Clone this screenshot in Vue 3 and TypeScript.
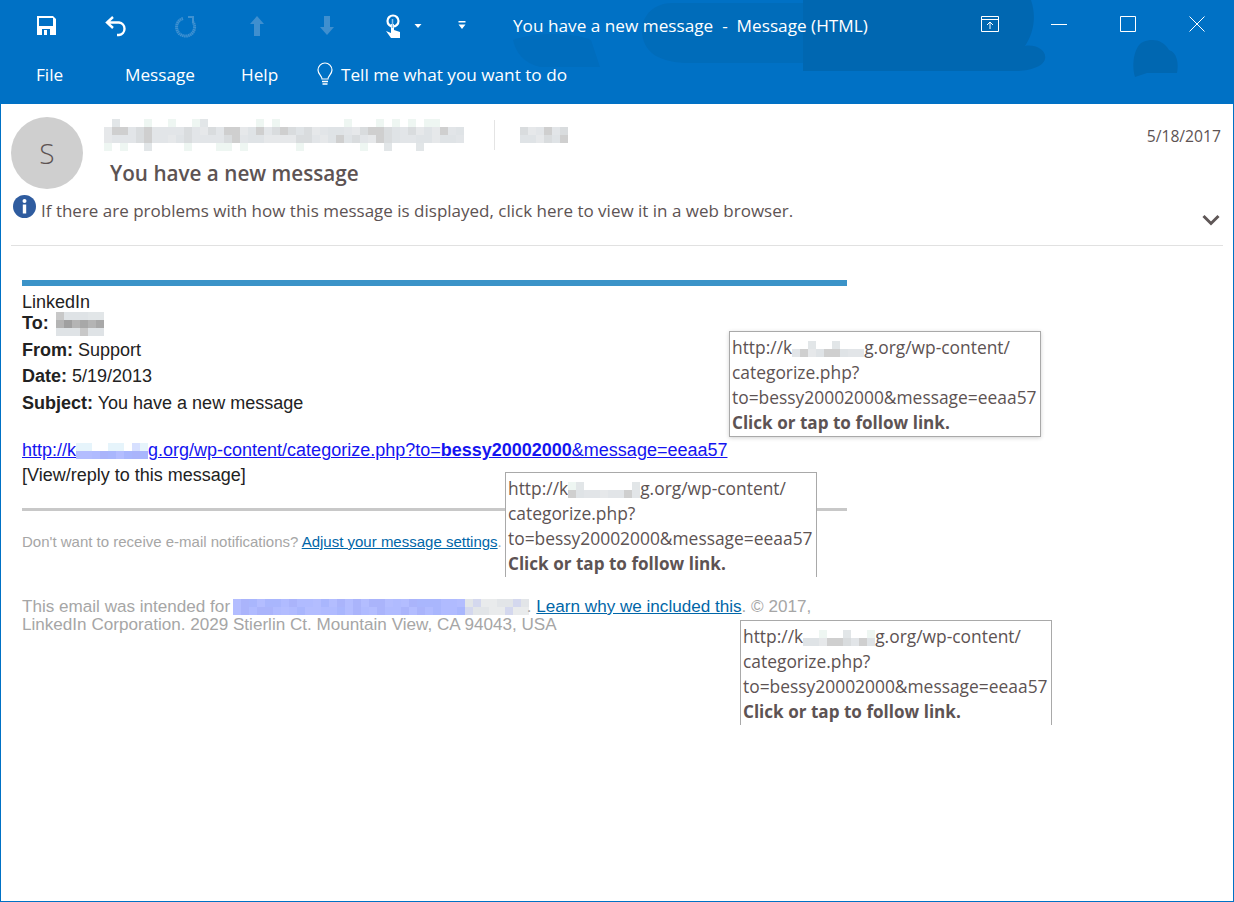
<template>
	<div class="window">
		<!-- Title bar and ribbon tabs -->
		<header class="ribbon">
			<svg class="clouds" width="1234" height="80" viewBox="0 0 1234 80">
				<path d="M513 40c20-8 60-8 78 0l9 27h-60c-16-4-24-14-27-27z" fill="#006dbd" />
				<path d="M642 30c0-16 14-27 30-27h131v60H690c-30 0-48-10-48-33z" fill="#006cba" />
				<path d="M803 0h228c6 18 2 34-6 46 10-2 22 4 20 13-2 8-16 12-30 12H803z" fill="#0067b1" />
				<path d="M1135 77c-4-14 0-32 8-35 10-4 20-2 26 8 8 2 10 14 8 23h-30z" fill="#0067b1" />
			</svg>
			<div class="title-row">
				<div class="quick-tools">
					<button v-for="tool in quickTools" :key="tool.name" class="tool" :class="tool.name">
						<svg width="26" height="26" viewBox="0 0 26 26" v-html="tool.svg"></svg>
					</button>
				</div>
				<div class="doc-title">You have a new message&nbsp; -&nbsp; Message (HTML)</div>
				<div class="window-btns">
					<svg class="win-icon restore" width="20" height="20" viewBox="0 0 20 20" fill="none" stroke="#fff">
						<path d="M1.500 2.500h17v15h-17zM1.500 5.500h17M10 15V8M7 11l3-3 3 3" />
					</svg>
					<svg class="win-icon minimize" width="16" height="20" viewBox="0 0 16 20" fill="none" stroke="#fff">
						<path d="M0 10.500h16" />
					</svg>
					<svg class="win-icon maximize" width="16" height="20" viewBox="0 0 16 20" fill="none" stroke="#fff">
						<path d="M.5 2.500h15v15H.5z" />
					</svg>
					<svg class="win-icon close" width="16" height="20" viewBox="0 0 16 20" fill="none" stroke="#fff">
						<path d="M.5 2.500l15 15M15.500 2.500l-15 15" />
					</svg>
				</div>
			</div>
			<nav class="tab-row">
				<span class="tab file">File</span>
				<span class="tab message">Message</span>
				<span class="tab help">Help</span>
				<svg class="bulb" width="18" height="24" viewBox="0 0 18 24" fill="none" stroke="#fff" stroke-width="1.2">
					<path d="M6 17c0-3-4-5-4-9a7 7 0 0 1 14 0c0 4-4 6-4 9z" />
					<path d="M6 19.500h6M6.500 22h5" stroke-width="1.5" />
				</svg>
				<span class="tell">Tell me what you want to do</span>
			</nav>
		</header>

		<!-- Message header -->
		<section class="msg-head">
			<div class="head-top">
				<div class="avatar">S</div>
				<div class="head-main">
					<div class="sender">
						<span class="smudge sender-name" :style="senderName"></span>
						<div class="sender-sep"></div>
						<span class="smudge" :style="senderExtra"></span>
					</div>
					<div class="subject">You have a new message</div>
				</div>
				<div class="date">5/18/2017</div>
			</div>
			<div class="info-row">
				<svg class="info-icon" width="23" height="23" viewBox="0 0 23 23">
					<circle cx="11.500" cy="11.500" r="11.500" fill="#2f5c9f" />
					<rect x="9.800" y="9.500" width="3.400" height="9" fill="#fff" />
					<circle cx="11.500" cy="6" r="2" fill="#fff" />
				</svg>
				<span>If there are problems with how this message is displayed, click here to view it in a web browser.</span>
				<svg class="chevron" width="18" height="12" viewBox="0 0 18 12" fill="none" stroke="#5f5757" stroke-width="3">
					<path d="M1.500 2l7.500 7.500L16.500 2" />
				</svg>
			</div>
		</section>

		<!-- Message body -->
		<main class="msg-body">
			<div class="accent-bar"></div>
			<div class="line first">LinkedIn</div>
			<div class="line to"><b>To:</b> <span class="smudge inline to-name" :style="toName"></span></div>
			<div class="line from"><b>From:</b> Support</div>
			<div class="line date-line"><b>Date:</b> 5/19/2013</div>
			<div class="line subject-line"><b>Subject:</b> You have a new message</div>
			<a class="main-link">http://k<span class="smudge inline" :style="linkHide"></span>g.org/wp-content/categorize.php?to=<b>bessy20002000</b>&amp;message=eeaa57</a>
			<div class="line view">[View/reply to this message]</div>
			<div class="rule"></div>
			<div class="small settings">Don't want to receive e-mail notifications? <a>Adjust your message settings</a>.</div>
			<div class="small intended">
				This email was intended for <span class="smudge inline mail-head" :style="mailHide"></span><span class="smudge inline mail-tail" :style="mailTail"></span>. <a>Learn why we included this</a>. © 2017,<br />
				LinkedIn Corporation. 2029 Stierlin Ct. Mountain View, CA 94043, USA
			</div>
		</main>

		<!-- Link tooltips lying over the message -->
		<div
			v-for="tip in tips"
			:key="tip.x"
			class="tip"
			:class="{ cut: tip.cut }"
			:style="{ left: `${tip.x}px`, top: `${tip.y}px` }"
		>
			<div>http://k<span class="smudge inline" :style="tip.hide"></span>g.org/wp-content/</div>
			<div>categorize.php?</div>
			<div>to=bessy20002000&amp;message=eeaa57</div>
			<div class="tip-hint">Click or tap to follow link.</div>
		</div>
	</div>
</template>

<script setup lang="ts">
	interface QuickTool {
		name: string;
		svg: string;
	}

	const CELL = 8;
	const GREY_BAND = ['#dfe3e6', '#e2e5e8', '#d9dcde', '#e2e5e8', '#cfcfcf', '#e6e8ea'];
	const GREY_EDGE = ['#ffffff', '#ffffff', '#ffffff', '#ffffff', '#ffffff', '#ffffff', '#eef6f2', '#e2e6e8'];
	const BLUE_BAND = ['#a9b6fd', '#b3bdff', '#aab4fb', '#b0bbff'];
	const BLUE_EDGE = ['#ffffff', '#e6f4fb', '#d7e0ff'];

	// Redacted text: rows of flat pixel cells, 'b' rows are dense and 'e' rows are sparse
	const mosaic = (cols: number, pattern: string, seed: number, band: string[], edge: string[]) => {
		let state = seed;
		const pick = (list: string[]): string => {
			state = (state * 9301 + 49297) % 233280;
			return list[Math.floor((state / 233280) * list.length)];
		};
		const rows = pattern.split('').map((kind) => {
			const stops: string[] = [];
			for (let i = 0; i < cols; i++) {
				const color = pick(kind === 'b' ? band : edge);
				stops.push(`${color} ${i * CELL}px ${(i + 1) * CELL}px`);
			}
			return `linear-gradient(90deg, ${stops.join(', ')})`;
		});
		return {
			width: `${cols * CELL}px`,
			height: `${rows.length * CELL}px`,
			backgroundImage: rows.join(', '),
			backgroundSize: rows.map(() => `100% ${CELL}px`).join(', '),
			backgroundPosition: rows.map((_, i) => `0 ${i * CELL}px`).join(', '),
		};
	};

	const senderName = mosaic(45, 'ebbe', 11, GREY_BAND, GREY_EDGE);
	const senderExtra = mosaic(6, 'bb', 5, GREY_BAND, GREY_EDGE);
	const toName = mosaic(6, 'ebe', 23, ['#a8a8a8', '#b4b4b4', '#a0a0a0'], ['#c8c8c8', '#e2e6e8', '#dfe3e6']);
	const linkHide = mosaic(9, 'eb', 7, BLUE_BAND, BLUE_EDGE);
	const mailHide = mosaic(29, 'bb', 31, BLUE_BAND, BLUE_EDGE);
	const mailTail = mosaic(8, 'bb', 9, ['#d4d8ee', '#e2e5e8', '#e9ebec'], GREY_EDGE);

	const tips = [
		{ x: 728, y: 331, cut: false, hide: mosaic(9, 'eb', 13, GREY_BAND, GREY_EDGE) },
		{ x: 504, y: 472, cut: true, hide: mosaic(9, 'eb', 41, GREY_BAND, GREY_EDGE) },
		{ x: 739, y: 620, cut: true, hide: mosaic(9, 'eb', 77, GREY_BAND, GREY_EDGE) },
	];

	const quickTools: QuickTool[] = [
		{
			name: 'save',
			svg: '<path fill="#fff" d="M4 3h16l3 3v16H4z"/><path fill="#0071c5" d="M6 5h14v8H6zM9 16h8v6H9z"/><path fill="#fff" d="M11 17h3v5h-3z"/>',
		},
		{
			name: 'undo',
			svg: '<path fill="none" stroke="#fff" stroke-width="2.4" d="M10 4 4 9.500l6 5.500M4 9.500h12a6.300 6.300 0 0 1 0 12.500h-2"/>',
		},
		{
			name: 'redo',
			svg: '<path fill="none" stroke="#3f91d1" stroke-width="3" stroke-dasharray="1.500 .5" d="M10 5.500a9 9 0 1 0 10 3.500"/><path fill="#3f91d1" d="M15 3h6v7h-2V5h-4z"/>',
		},
		{
			name: 'up',
			svg: '<path fill="#3f8fcf" d="M13 3l7 8h-4v12h-6V11H6z"/>',
		},
		{
			name: 'down',
			svg: '<path fill="#3f8fcf" d="M13 22l-7-8h4V3h6v11h4z"/>',
		},
		{
			name: 'touch',
			svg: '<circle cx="13" cy="8" r="5.500" fill="none" stroke="#fff" stroke-width="2.200"/><path fill="#fff" d="M6 18l5 2V11h3v6l6 2v6H11z"/><path stroke="#8cc1ea" stroke-width="1.500" d="M12.500 6v9"/>',
		},
		{
			name: 'caret',
			svg: '<path fill="#fff" d="M9.500 11h7L13 15z"/>',
		},
		{
			name: 'customize',
			svg: '<path fill="#fff" d="M9.500 8h7v1.500h-7zM9.500 11.500h7L13 16z"/>',
		},
	];
</script>

<style scoped>
	.window {
		position: relative;
		box-sizing: border-box;
		width: 1234px;
		height: 902px;
		background: #fff;
		border: 1px solid #0071c5;
		border-top: 0;
		font-family: 'Liberation Sans', Arial, sans-serif;
		overflow: hidden;
	}

	.ribbon {
		position: relative;
		height: 104px;
		margin: 0 -1px;
		background: #0071c5;
		color: #fff;
		font-family: 'Open Sans', sans-serif;
	}

	.clouds {
		position: absolute;
		left: 0;
		top: 0;
	}

	.title-row {
		position: relative;
		display: flex;
		align-items: center;
		height: 52px;
	}

	.quick-tools {
		display: flex;
		align-items: center;
		padding-left: 33px;
		width: 513px;
		box-sizing: border-box;
		flex: none;
	}

	.tool {
		width: 26px;
		height: 26px;
		padding: 0;
		border: 0;
		background: none;
		margin-right: 44px;
	}

	.tool.redo {
		margin-right: 45px;
	}

	.tool.down {
		margin-right: 40px;
	}

	.tool.touch {
		margin-right: -1px;
	}

	.tool.caret {
		margin-right: 18px;
	}

	.doc-title {
		flex: 1;
		margin-bottom: 2px;
		font-size: 17.2px;
		white-space: nowrap;
	}

	.window-btns {
		display: flex;
		align-items: center;
		padding-right: 29px;
		margin-bottom: 5px;
	}

	.win-icon.minimize {
		margin-left: 51px;
	}

	.win-icon.maximize,
	.win-icon.close {
		margin-left: 53px;
	}

	.tab-row {
		position: relative;
		display: flex;
		align-items: center;
		height: 44px;
		font-size: 17.2px;
	}

	.tab.file {
		margin-left: 36px;
		width: 89px;
	}

	.tab.message {
		width: 116px;
	}

	.tab.help {
		width: 75px;
	}

	.bulb {
		margin-right: 7px;
	}

	.msg-head {
		margin: 0 10px;
		height: 141px;
		border-bottom: 1px solid #e1e1e1;
		color: #5d5353;
		font-family: 'Open Sans', sans-serif;
	}

	.head-top {
		display: flex;
		padding-top: 13px;
		height: 72px;
	}

	.avatar {
		flex: none;
		width: 72px;
		height: 72px;
		border-radius: 50%;
		background: #cfcfcf;
		display: flex;
		align-items: center;
		justify-content: center;
		font-size: 28px;
		font-weight: 300;
	}

	.head-main {
		flex: 1;
		padding-left: 27px;
	}

	.sender {
		display: flex;
		align-items: center;
		height: 32px;
		margin-top: 2px;
	}

	.sender-sep {
		width: 1px;
		height: 30px;
		margin: 0 25px 0 30px;
		background: #e4e4e4;
	}

	.sender-name {
		margin-left: -6px;
	}

	.subject {
		margin-top: 8px;
		font-size: 20.7px;
		font-weight: 600;
		line-height: 28px;
	}

	.date {
		font-size: 15.7px;
		padding-top: 8px;
		padding-right: 2px;
	}

	.info-row {
		display: flex;
		align-items: center;
		padding-left: 2px;
		margin-top: 6px;
		font-size: 17px;
		gap: 5px;
	}

	.info-icon {
		margin-bottom: 7px;
	}

	.chevron {
		margin: 14px 3px -6px auto;
	}

	.smudge {
		display: inline-block;
		background-repeat: no-repeat;
		vertical-align: middle;
	}

	.smudge.inline {
		margin-top: -8px;
		margin-bottom: -8px;
	}

	.to-name {
		margin-left: 2px;
	}

	.mail-head {
		margin-left: -2px;
	}

	.mail-tail {
		margin-right: -2px;
	}

	.msg-body {
		padding: 34px 0 0 21px;
		width: 825px;
		font-size: 18px;
		color: #222;
	}

	.accent-bar {
		height: 6px;
		background: #3b93c8;
		margin-bottom: 6px;
	}

	.line {
		line-height: 20px;
	}

	.line.to {
		line-height: 22px;
	}

	.line.from {
		margin-top: 3px;
		line-height: 26px;
	}

	.line.date-line {
		line-height: 26px;
	}

	.line.subject-line {
		margin-top: 1px;
		line-height: 26px;
	}

	.main-link {
		display: block;
		margin-top: 21px;
		line-height: 26px;
		color: #1414f0;
		text-decoration: underline;
	}

	.line.view {
		line-height: 24px;
	}

	.rule {
		height: 3px;
		margin-top: 21px;
		background: #c8c8c8;
	}

	.small {
		color: #a6a6a6;
	}

	.small a {
		color: #0066a8;
		text-decoration: underline;
	}

	.settings {
		margin-top: 22px;
		font-size: 15px;
		line-height: 18px;
	}

	.intended {
		margin-top: 47px;
		font-size: 17.1px;
		line-height: 18px;
	}

	.tip {
		position: absolute;
		box-sizing: border-box;
		width: 312px;
		height: 106px;
		padding: 3px 2px;
		background: #fff;
		border: 1px solid #a9a9a9;
		box-shadow: 0 1px 4px rgba(0, 0, 0, 0.18);
		font-family: 'Open Sans', sans-serif;
		font-size: 17.4px;
		line-height: 25px;
		color: #5d5353;
		white-space: nowrap;
	}

	.tip.cut {
		height: 105px;
		border-bottom: 0;
		box-shadow: none;
	}

	.tip-hint {
		font-size: 17.1px;
		font-weight: 700;
	}
</style>
